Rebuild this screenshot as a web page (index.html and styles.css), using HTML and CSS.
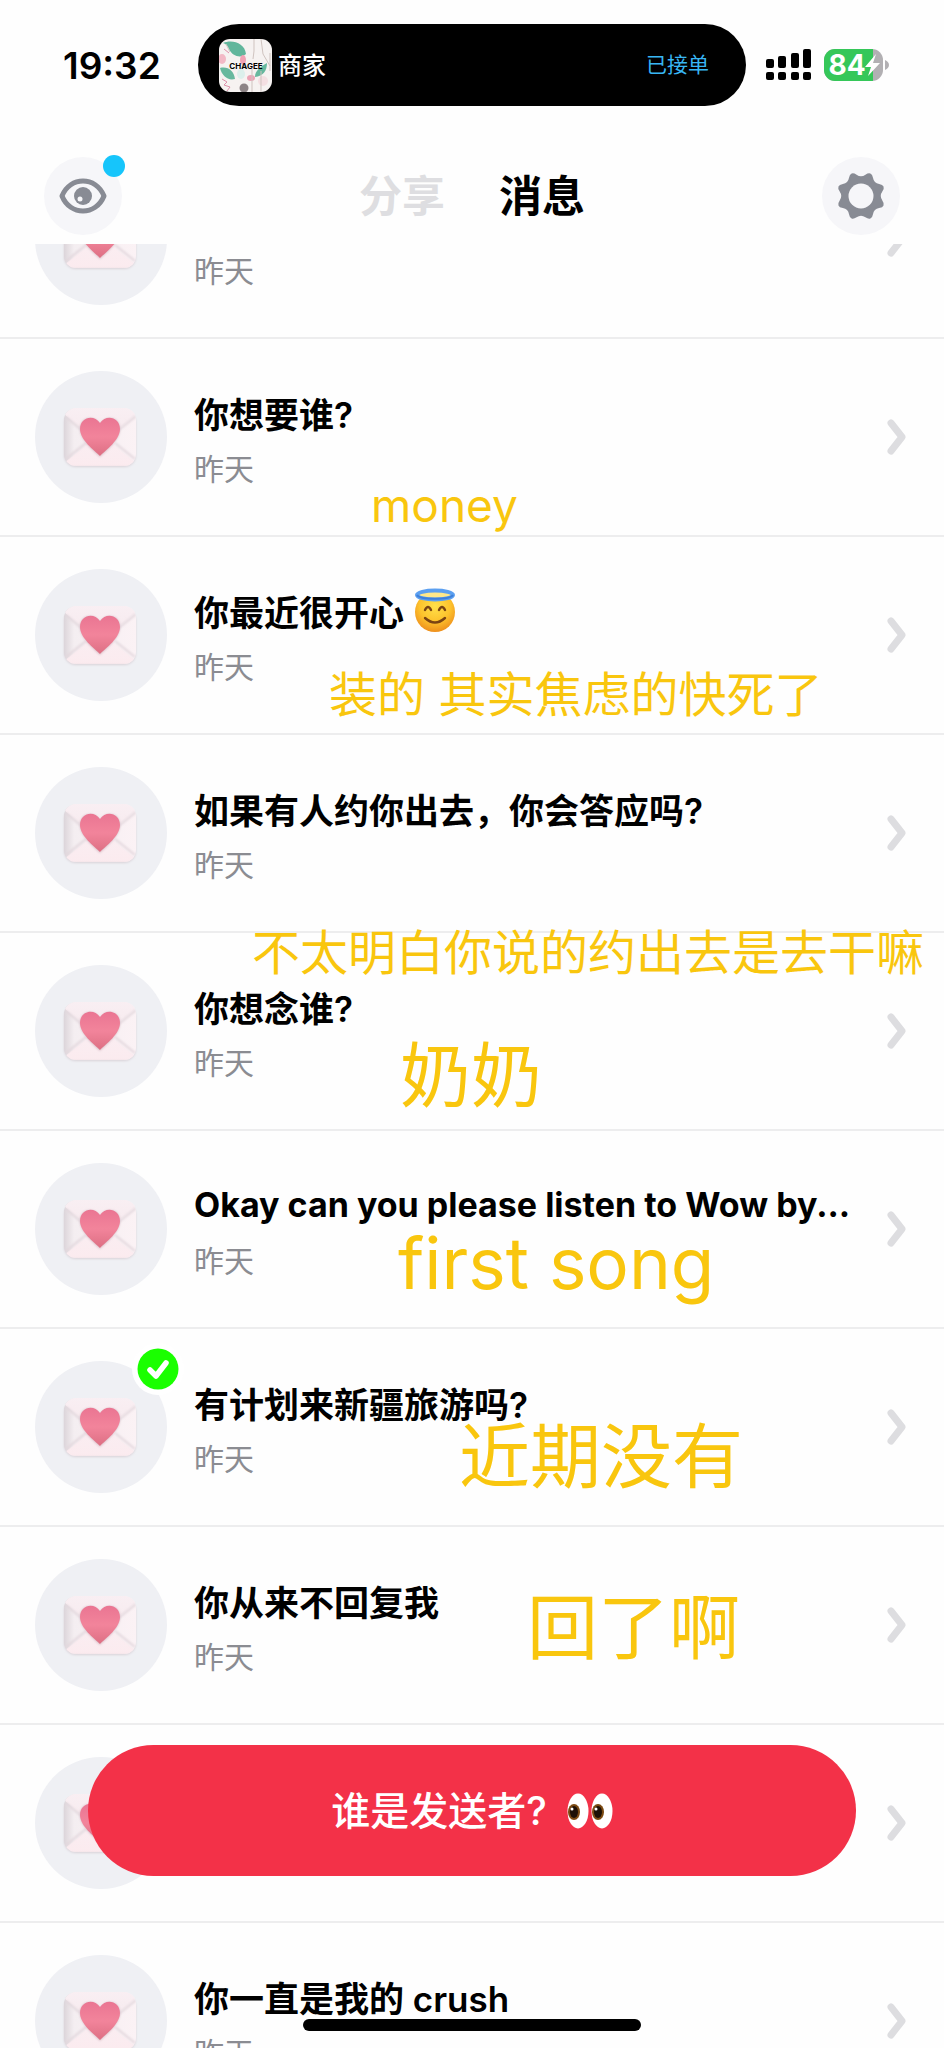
FILE: index.html
```html
<!DOCTYPE html>
<html lang="zh-CN">
<head>
<meta charset="utf-8">
<meta name="viewport" content="width=device-width, initial-scale=1">
<title>消息</title>
<link rel="stylesheet" href="styles.css">
</head>
<body>
<svg class="defs" aria-hidden="true">
  <defs>
    <linearGradient id="paper" x1="0" y1="0" x2="1" y2="0">
      <stop offset="0" stop-color="#dcd5da"/><stop offset=".14" stop-color="#f4eef1"/><stop offset="1" stop-color="#fbf2f5"/>
    </linearGradient>
    <linearGradient id="flap" x1="0" y1="0" x2="0" y2="1">
      <stop offset="0" stop-color="#f9eff3"/><stop offset="1" stop-color="#f6e9ed"/>
    </linearGradient>
    <linearGradient id="base" x1="0" y1="0" x2="0" y2="1">
      <stop offset="0" stop-color="#faeef2"/><stop offset=".8" stop-color="#fbebef"/><stop offset="1" stop-color="#e0d5d9"/>
    </linearGradient>
    <linearGradient id="love" x1="0" y1="0" x2="0" y2="1">
      <stop offset="0" stop-color="#ea7592"/><stop offset=".5" stop-color="#f2849b"/><stop offset="1" stop-color="#dd6f83"/>
    </linearGradient>
    <radialGradient id="face" cx=".5" cy=".35" r=".65">
      <stop offset="0" stop-color="#ffe04a"/><stop offset=".6" stop-color="#fdc22c"/><stop offset="1" stop-color="#ee8f1c"/>
    </radialGradient>
    <filter id="soft" x="-20%" y="-20%" width="140%" height="140%"><feGaussianBlur stdDeviation="1.2"/></filter>
    <clipPath id="letter-clip"><rect x="29" y="37" width="72" height="58" rx="12"/></clipPath>
    <clipPath id="brand-clip"><rect width="53" height="53" rx="11"/></clipPath>
    <clipPath id="battery-clip"><rect width="59" height="32" rx="11"/></clipPath>
    <symbol id="letter" viewBox="0 0 132 132">
      <rect x="29" y="40" width="72" height="56" rx="12" fill="#d9d2d8" filter="url(#soft)"/>
      <g clip-path="url(#letter-clip)">
        <rect x="29" y="37" width="72" height="58" fill="url(#paper)"/>
        <path d="M29 92 55 71q10-8 20 0l26 21v8H29z" fill="url(#base)"/>
        <path d="M29 43 57 67q8 7 16 0l28-24v-8H29z" fill="url(#flap)"/>
        <path d="M31 46 50 62M101 45 80 62M31 88 51 72M100 88 80 72" stroke="#e2d6dc" stroke-width="2" filter="url(#soft)"/>
      </g>
      <path d="M65 86C59 80 45 69 45 58c0-12 14-15 20-5 6-10 20-7 20 5 0 11-14 22-20 28z" fill="#c9a9b5" opacity=".7" filter="url(#soft)"/>
      <path d="M65 85C59 79 45 69 45 58c0-12 14-15 20-6 6-9 20-6 20 6 0 11-14 21-20 27z" fill="url(#love)"/>
    </symbol>
    <symbol id="chevron" viewBox="0 0 20 36"><path d="M4 4 15 18 4 32" fill="none" stroke="#dddde0" stroke-width="7" stroke-linecap="round" stroke-linejoin="round"/></symbol>
  </defs>
</svg>
<div class="phone">
  <div class="status">
    <time class="clock">19:32</time>
    <div class="island">
      <svg class="brand" viewBox="0 0 53 53" role="img" aria-label="CHAGEE">
        <g clip-path="url(#brand-clip)">
          <rect width="53" height="53" fill="#f6f2f1"/>
          <path d="M4 4c9-4 22 0 23 11-5 5-14 2-17-5Q8 5 4 4z" fill="#61b69c"/>
          <path d="M1 29c8-2 14 3 15 11C9 42 3 37 1 29zM48 24c0 8-4 13-12 14 0-6 5-10 12-14z" fill="#67b89e"/>
          <ellipse cx="24" cy="21" rx="3" ry="5" fill="#f0a2b4"/><ellipse cx="3" cy="20" rx="4" ry="5" fill="#f2b9c6"/>
          <ellipse cx="32" cy="39" rx="4" ry="3" fill="#eba3b5"/><ellipse cx="44" cy="42" rx="5" ry="5" fill="#f4dfe2"/>
          <ellipse cx="22" cy="35" rx="4" ry="5" fill="#dcefeb"/>
          <circle cx="25" cy="49" r="4.500" fill="#8d8486"/>
          <path d="M35 0v12l-1 8M42 0l2 15 7 12M33 30v23M42 32v21M7 5l4 8M51 14v18" stroke="#cfc3bf" fill="none"/>
          <path d="M3 40l5 3-3 3 6 2-3 4M5 10l5 4" stroke="#dd91aa" fill="none"/>
        </g>
        <text x="27" y="30" text-anchor="middle" class="brand-name">CHAGEE</text>
      </svg>
      <span class="merchant">商家</span>
      <span class="order">已接单</span>
    </div>
    <svg class="signal" viewBox="0 0 46 32" aria-hidden="true">
      <rect y="10" width="8" height="9" rx="2"/><rect x="12" y="7" width="8" height="12" rx="2"/><rect x="25" y="4" width="8" height="15" rx="2"/><rect x="37" width="8" height="19" rx="2"/>
      <rect y="23" width="8" height="8" rx="2"/><rect x="12" y="23" width="8" height="8" rx="2"/><rect x="25" y="23" width="8" height="8" rx="2"/><rect x="37" y="23" width="8" height="8" rx="2"/>
    </svg>
    <svg class="battery" viewBox="0 0 65 32" role="img" aria-label="84%">
      <g clip-path="url(#battery-clip)"><rect width="59" height="32" fill="#b2b0b3"/><rect width="49" height="32" fill="#35c759"/></g>
      <path d="M61 11q4 2 4 5t-4 5z" fill="#b2b0b3"/>
      <text x="23" y="26" text-anchor="middle" class="charge">84</text>
      <path d="M52 5 41 18h6l-3 9 12-13h-7z" fill="#fff"/>
    </svg>
  </div>

  <header class="top">
    <button class="round" type="button" aria-label="查看">
      <svg viewBox="0 0 78 78" aria-hidden="true">
        <path d="M18 39C26 19 52 19 60 39 52 59 26 59 18 39z" fill="none" stroke="#888b94" stroke-width="5" stroke-linejoin="round"/>
        <circle cx="39" cy="39" r="9" fill="#888b94"/><circle cx="36" cy="42" r="2.500" fill="#f6f6f9"/>
      </svg>
      <span class="dot"></span>
    </button>
    <nav class="tabs"><a class="tab" href="#share">分享</a><a class="tab current" href="#messages" aria-current="page">消息</a></nav>
    <button class="round" type="button" aria-label="设置">
      <svg viewBox="-39 -39 78 78" aria-hidden="true">
        <path d="M-5-20.500Q0-17 5-20.500Q10-24 11-18Q12-12 18-11Q24-10 20.500-5Q17 0 20.500 5Q24 10 18 11Q12 12 11 18Q10 24 5 20.500Q0 17-5 20.500Q-10 24-11 18Q-12 12-18 11Q-24 10-20.500 5Q-17 0-20.500-5Q-24-10-18-11Q-12-12-11-18Q-10-24-5-20.500z" fill="#888b94" stroke="#888b94" stroke-width="2"/>
        <circle r="12.500" fill="#f6f6f9"/>
      </svg>
    </button>
  </header>

  <main class="viewport">
    <ul class="list">
      <li class="row"><a class="link" href="#m1" aria-label="昨天">
        <span class="avatar"><svg><use href="#letter"/></svg></span>
        <span class="body"><span class="title"></span><span class="day">昨天</span></span>
        <svg class="chevron"><use href="#chevron"/></svg></a></li>
      <li class="row"><a class="link" href="#m2">
        <span class="avatar"><svg><use href="#letter"/></svg></span>
        <span class="body"><span class="title">你想要谁?</span><span class="day">昨天</span></span>
        <svg class="chevron"><use href="#chevron"/></svg></a>
        <span class="note note-money">money</span></li>
      <li class="row"><a class="link" href="#m3">
        <span class="avatar"><svg><use href="#letter"/></svg></span>
        <span class="body"><span class="title">你最近很开心
          <svg class="halo" viewBox="0 0 42 44" role="img" aria-label="微笑天使">
            <circle cx="21" cy="24" r="20" fill="url(#face)"/>
            <ellipse cx="21" cy="7" rx="18" ry="4.500" fill="#ffe88a" stroke="#5b9ff0" stroke-width="4"/>
            <path d="M3 7c3 5 33 5 36 0" fill="none" stroke="#3f7fd9" stroke-width="2"/>
            <path d="M11 22q3-6 6 0M25 22q3-6 6 0M11 30q10 9 20 0" fill="none" stroke="#7a4312" stroke-width="2.400" stroke-linecap="round"/>
          </svg></span><span class="day">昨天</span></span>
        <svg class="chevron"><use href="#chevron"/></svg></a>
        <span class="note note-anxious">装的 其实焦虑的快死了</span></li>
      <li class="row"><a class="link" href="#m4">
        <span class="avatar"><svg><use href="#letter"/></svg></span>
        <span class="body"><span class="title">如果有人约你出去，你会答应吗?</span><span class="day">昨天</span></span>
        <svg class="chevron"><use href="#chevron"/></svg></a></li>
      <li class="row"><a class="link" href="#m5">
        <span class="avatar"><svg><use href="#letter"/></svg></span>
        <span class="body"><span class="title">你想念谁?</span><span class="day">昨天</span></span>
        <svg class="chevron"><use href="#chevron"/></svg></a>
        <span class="note note-date">不太明白你说的约出去是去干嘛</span>
        <span class="note large note-granny">奶奶</span></li>
      <li class="row"><a class="link" href="#m6">
        <span class="avatar"><svg><use href="#letter"/></svg></span>
        <span class="body"><span class="title latin">Okay can you please listen to Wow by...</span><span class="day">昨天</span></span>
        <svg class="chevron"><use href="#chevron"/></svg></a>
        <span class="note large note-song">first song</span></li>
      <li class="row"><a class="link" href="#m7">
        <span class="avatar"><svg><use href="#letter"/></svg>
          <svg class="check" viewBox="0 0 52 52" aria-hidden="true"><circle cx="26" cy="26" r="26" fill="#fff"/><circle cx="26" cy="26" r="20.500" fill="#1aff00"/><path d="M18 27l6 6 10-13" fill="none" stroke="#fff" stroke-width="5.500" stroke-linecap="round" stroke-linejoin="round"/></svg></span>
        <span class="body"><span class="title">有计划来新疆旅游吗?</span><span class="day">昨天</span></span>
        <svg class="chevron"><use href="#chevron"/></svg></a>
        <span class="note large note-soon">近期没有</span></li>
      <li class="row"><a class="link" href="#m8">
        <span class="avatar"><svg><use href="#letter"/></svg></span>
        <span class="body"><span class="title">你从来不回复我</span><span class="day">昨天</span></span>
        <svg class="chevron"><use href="#chevron"/></svg></a>
        <span class="note large note-replied">回了啊</span></li>
      <li class="row"><a class="link" href="#m9" aria-label="消息">
        <span class="avatar"><svg><use href="#letter"/></svg></span>
        <span class="body"></span>
        <svg class="chevron"><use href="#chevron"/></svg></a></li>
      <li class="row"><a class="link" href="#m10">
        <span class="avatar"><svg><use href="#letter"/></svg></span>
        <span class="body"><span class="title">你一直是我的 crush</span><span class="day">昨天</span></span>
        <svg class="chevron"><use href="#chevron"/></svg></a></li>
    </ul>
  </main>

  <button class="reveal" type="button"><span class="reveal-label">谁是发送者?</span>
    <svg class="eyes" viewBox="0 0 46 36" aria-hidden="true">
      <ellipse cx="11" cy="18" rx="10.500" ry="17.500" fill="#fff"/><ellipse cx="35" cy="18" rx="10.500" ry="17.500" fill="#fff"/>
      <ellipse cx="7" cy="19" rx="6" ry="8" fill="#7b4a12"/><ellipse cx="31" cy="19" rx="6" ry="8" fill="#7b4a12"/>
      <ellipse cx="7" cy="19" rx="4" ry="6" fill="#1d1006"/><ellipse cx="31" cy="19" rx="4" ry="6" fill="#1d1006"/>
      <circle cx="5" cy="16" r="1.500" fill="#fff"/><circle cx="29" cy="16" r="1.500" fill="#fff"/>
    </svg>
  </button>
  <div class="home"></div>
</div>
</body>
</html>
```
FILE: styles.css
```css
* { box-sizing: border-box; }
body {
  margin: 0;
  background: #fefefe;
  color: #000;
  font-family: Inter, "Noto Sans CJK SC", sans-serif;
}
a { color: inherit; text-decoration: none; }
button { border: 0; padding: 0; font: inherit; cursor: pointer; }
svg { display: block; }
.defs { position: absolute; width: 0; height: 0; }

.phone {
  position: relative;
  display: flex;
  flex-direction: column;
  height: 100vh;
  overflow: hidden;
}

/* Status bar */
.status {
  display: flex;
  align-items: center;
  flex: none;
  height: 130px;
  padding: 0 55px 0 63px;
}
.clock { width: 135px; font-size: 37px; font-weight: 600; }
.island {
  display: flex;
  align-items: center;
  flex: 1;
  height: 82px;
  padding: 0 37px 4px 21px;
  border-radius: 41px;
  background: #000;
}
.brand { width: 53px; height: 53px; margin-top: 4px; }
.brand-name { font: 700 8px Inter, sans-serif; }
.merchant { margin-left: 6px; color: #fff; font-size: 24px; font-weight: 500; }
.order { margin-left: auto; color: #38b6f4; font-size: 21px; }
.signal { width: 46px; height: 32px; margin-left: 20px; }
.battery { width: 65px; height: 32px; margin-left: 12px; }
.charge { fill: #fff; font: 700 28px Inter, sans-serif; }

/* Header */
.top {
  display: flex;
  align-items: center;
  justify-content: space-between;
  flex: none;
  height: 114px;
  padding: 17px 44px 0;
}
.round {
  position: relative;
  width: 78px;
  height: 78px;
  border-radius: 50%;
  background: #f6f6f9;
}
.round svg { width: 78px; height: 78px; }
.dot {
  position: absolute;
  top: -2px;
  right: -3px;
  width: 22px;
  height: 22px;
  border-radius: 50%;
  background: #16c5fb;
}
.tabs { display: flex; gap: 54px; font-size: 43px; line-height: 60px; font-weight: 600; }
.tab { color: #dedee1; }
.current { color: #000; }

/* Messages */
.viewport { flex: 1; min-height: 0; overflow: hidden; }
.list { margin: -103px 0 0; padding: 0; list-style: none; }
.row { position: relative; border-bottom: 2px solid #ededee; }
.link {
  display: flex;
  align-items: center;
  height: 196px;
  padding: 0 37px 0 35px;
}
.avatar {
  position: relative;
  flex: none;
  width: 132px;
  height: 132px;
  border-radius: 50%;
  background: #eff0f4;
}
.avatar svg { width: 100%; height: 100%; }
.avatar .check {
  position: absolute;
  top: -18px;
  right: -17px;
  width: 52px;
  height: 52px;
}
.body { flex: 1; min-width: 0; padding: 6px 0 0 27px; }
.title, .day { display: flex; align-items: center; white-space: nowrap; }
.title { gap: 10px; height: 54px; font-size: 35px; font-weight: 600; }
.latin { font-size: 34px; font-weight: 700; }
.day { height: 56px; color: #8b8c92; font-size: 30px; }
.halo { width: 42px; height: 44px; }
.chevron { flex: none; width: 20px; height: 36px; }

/* Replies laid over the list */
.note {
  position: absolute;
  color: #f9c60e;
  font-size: 48px;
  font-weight: 400;
  line-height: 56px;
  white-space: nowrap;
}
.large { font-size: 71px; line-height: 80px; }
.note-money { left: 371px; top: 138px; font-size: 46px; }
.note-anxious { left: 329px; top: 130px; }
.note-date { left: 252px; top: -8px; }
.note-granny { left: 400px; top: 102px; }
.note-song { left: 398px; top: 92px; }
.note-soon { left: 459px; top: 87px; }
.note-replied { left: 527px; top: 60px; }

/* Floating controls */
.reveal {
  position: absolute;
  left: 88px;
  right: 88px;
  bottom: 172px;
  display: flex;
  align-items: center;
  justify-content: center;
  gap: 20px;
  height: 131px;
  border-radius: 66px;
  background: #f33148;
  color: #fff;
  font-size: 39px;
  font-weight: 500;
}
.reveal-label { padding-bottom: 5px; }
.eyes { width: 46px; height: 36px; }
.home {
  position: absolute;
  left: 50%;
  bottom: 17px;
  width: 338px;
  height: 12px;
  margin-left: -169px;
  border-radius: 6px;
  background: #000;
}
```
